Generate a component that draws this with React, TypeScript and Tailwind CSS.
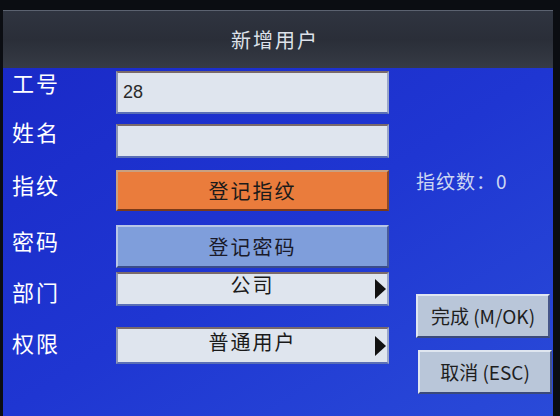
const font = { fontFamily: '"Noto Sans CJK SC", "Noto Sans", sans-serif' };

function Arrow() {
  return (
    <svg width="13" height="22" viewBox="0 0 13 22" className="absolute right-[2px] top-1/2 -translate-y-1/2">
      <path d="M1 1 L12 11 L1 21 Z" fill="#111" />
    </svg>
  );
}

function Row({
  label,
  mt,
  h,
  shift,
  children,
}: {
  label: string;
  mt: string;
  h: string;
  shift: string;
  children: React.ReactNode;
}) {
  return (
    <div className={`flex items-center ${mt} ${h}`}>
      <div className={`w-[113px] pl-[9px] text-[22px] leading-none text-white tracking-[2px] ${shift}`}>{label}</div>
      <div className="relative h-full w-[273px]">{children}</div>
    </div>
  );
}

const field =
  "h-full w-full border-t-2 border-l-2 border-b-2 border-r-2 border-t-[#7a6a6a] border-l-[#8d96b5] border-b-[#5a6fb5] border-r-[#9aa6c8] bg-[#dfe5ee]";

const sideBtn =
  "flex h-[44px] w-[134px] items-center justify-center border-2 border-t-[#dfe6f0] border-l-[#dfe6f0] border-b-[#3b4a7a] border-r-[#46568a] bg-[#b9c6d9] text-[19px] text-[#1e1e1e]";

export default function App() {
  return (
    <div className="h-[416px] w-[560px] overflow-hidden bg-[#0b0d12] pl-[3px] pr-[7px] pt-[10px]" style={font}>
      <div className="flex h-full flex-col">
        <div className="flex h-[58px] items-center justify-center border-t border-[#5b6270] bg-gradient-to-b from-[#2f3440] via-[#2a2e38] to-[#363b45] pr-[6px] text-[20px] tracking-[2px] text-[#dde2ea]">
          新增用户
        </div>
        <div className="flex flex-1 bg-gradient-to-br from-[#1a2ac8] via-[#1f36d2] to-[#2a4ad8]">
          <div className="flex flex-col">
            <Row label="工号" mt="mt-[3px]" h="h-[43px]" shift="mb-[22px]">
              <div className={`${field} flex items-center pl-[5px] text-[18px] text-[#2a2a2a]`} style={{ fontFamily: '"Liberation Sans", sans-serif' }}>
                28
              </div>
            </Row>
            <Row label="姓名" mt="mt-[10px]" h="h-[34px]" shift="mb-[20px]">
              <div className={field} />
            </Row>
            <Row label="指纹" mt="mt-[12px]" h="h-[41px]" shift="mb-[14px]">
              <div className="flex h-full w-full items-center justify-center border-2 border-t-[#c9a080] border-l-[#c9a080] border-b-[#7a3a1a] border-r-[#8a4a2a] bg-[#ea7c3c] text-[20px] tracking-[2px] text-[#1a1a1a]">
                登记指纹
              </div>
            </Row>
            <Row label="密码" mt="mt-[14px]" h="h-[43px]" shift="mb-[14px]">
              <div className="flex h-full w-full items-center justify-center border-2 border-t-[#b8c6e6] border-l-[#b8c6e6] border-b-[#3a4c8a] border-r-[#4a5c9a] bg-[#7f9edb] text-[20px] tracking-[2px] text-[#1a1a2a]">
                登记密码
              </div>
            </Row>
            <Row label="部门" mt="mt-[4px]" h="h-[34px]" shift="mt-[4px]">
              <div className={`${field} flex justify-center pt-0 text-[20px] leading-[22px] tracking-[2px] text-[#1a1a1a]`}>
                公司
              </div>
              <Arrow />
            </Row>
            <Row label="权限" mt="mt-[21px]" h="h-[37px]" shift="mb-[8px]">
              <div className={`${field} flex justify-center text-[20px] leading-[26px] tracking-[2px] text-[#1a1a1a]`}>
                普通用户
              </div>
              <Arrow />
            </Row>
          </div>
          <div className="flex flex-1 flex-col pl-[27px]">
            <div className="mt-[103px] text-[19px] leading-none tracking-[1px] text-[#ccd6f2]">
              指纹数：0
            </div>
            <div className={`mt-[104px] ${sideBtn}`}>完成 (M/OK)</div>
            <div className={`ml-[2px] mt-[12px] ${sideBtn}`}>取消 (ESC)</div>
          </div>
        </div>
      </div>
    </div>
  );
}
